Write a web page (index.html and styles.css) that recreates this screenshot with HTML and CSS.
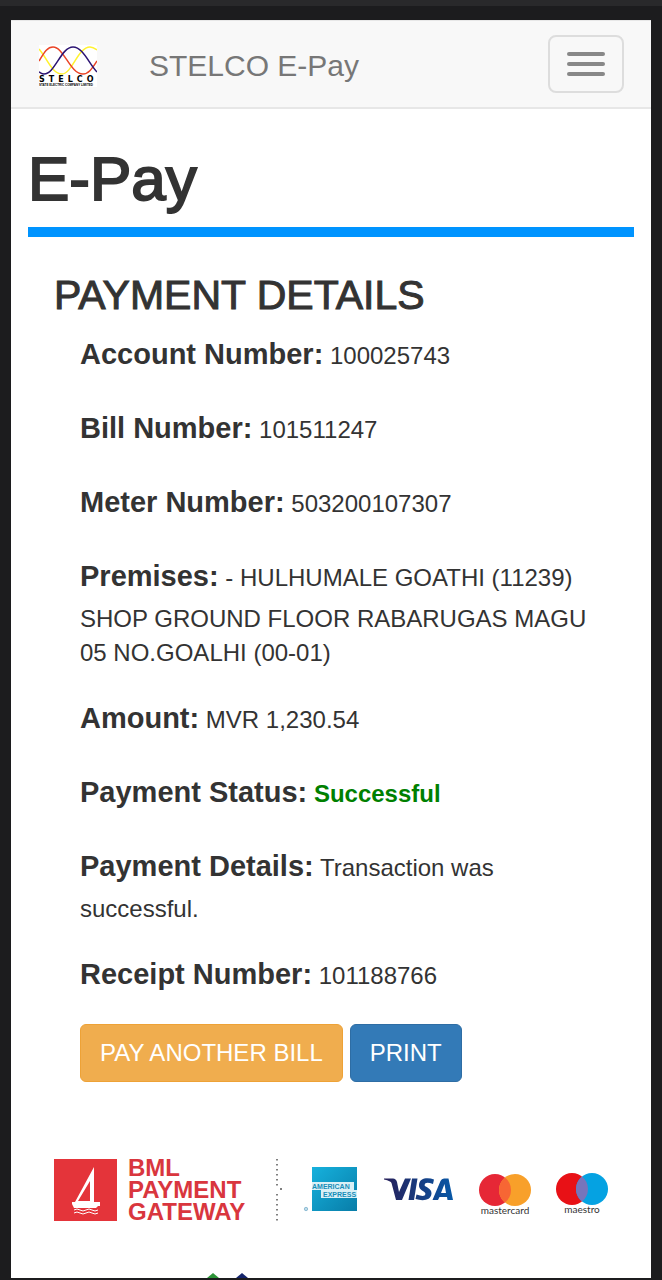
FILE: index.html
```html
<!DOCTYPE html>
<html lang="en">
<head>
<meta charset="utf-8">
<meta name="viewport" content="width=device-width, initial-scale=1">
<title>STELCO E-Pay</title>
<link rel="stylesheet" href="styles.css">
</head>
<body>
<div class="page">
  <header class="navbar">
    <a class="brand" href="#">
      <svg class="brand-logo" viewBox="0 0 58 42" role="img" aria-label="STELCO State Electric Company Limited">
        <rect width="58" height="42" fill="#fff"/>
        <g fill="none" stroke-width="1.5">
          <path d="M0 4C8 13 13 29 23 29S39 2 51 2Q54 2 58 5" stroke="#fff22d"/>
          <path d="M0 16C5 8 8 2 14 2C25 2 31 29 44 29C50 29 54 22 58 16" stroke="#ea4426"/>
          <path d="M0 27C2 28 3 29 5 29C16 29 22 2 34 2C44 2 50 19 58 27" stroke="#2b1372"/>
        </g>
        <text x="0" y="37" class="logo-name">STELCO</text>
        <text x="0" y="41" class="logo-small">STATE ELECTRIC COMPANY LIMITED</text>
      </svg>
      <span>STELCO E-Pay</span>
    </a>
    <button class="toggle" type="button" aria-label="Toggle navigation">
      <span class="bar"></span><span class="bar"></span><span class="bar"></span>
    </button>
  </header>
  <main class="content">
    <h1 class="title">E-Pay</h1>
    <section class="details">
      <h2 class="subtitle">PAYMENT DETAILS</h2>
      <div class="fields">
        <p class="field"><strong class="label">Account Number:</strong> 100025743</p>
        <p class="field"><strong class="label">Bill Number:</strong> 101511247</p>
        <p class="field"><strong class="label">Meter Number:</strong> 503200107307</p>
        <p class="field"><strong class="label">Premises:</strong> - HULHUMALE GOATHI (11239) SHOP GROUND FLOOR RABARUGAS MAGU 05 NO.GOALHI (00-01)</p>
        <p class="field"><strong class="label">Amount:</strong> MVR 1,230.54</p>
        <p class="field"><strong class="label">Payment Status:</strong> <b class="success">Successful</b></p>
        <p class="field"><strong class="label">Payment Details:</strong> Transaction was successful.</p>
        <p class="field"><strong class="label">Receipt Number:</strong> 101188766</p>
        <div class="actions">
          <button class="btn btn-warning" type="button">PAY ANOTHER BILL</button>
          <button class="btn btn-primary" type="button">PRINT</button>
        </div>
      </div>
    </section>
  </main>
  <footer class="footer">
    <div class="gateways">
      <svg width="201" height="64" viewBox="0 0 201 64" role="img" aria-label="BML Payment Gateway">
        <rect y="1" width="63" height="62" fill="#e4343a"/>
        <path fill="#fff" fill-rule="evenodd" d="M40 9V44H46V48H44L42 50H20L18 46V44H21ZM36 23L24 43H36Z"/>
        <path d="M20 52q3-2 6 0t6 0t6 0t6 0M20 55q3-2 6 0t6 0t6 0t6 0" fill="none" stroke="#fff" stroke-width="1"/>
        <g class="bml-text">
          <text x="74" y="18">BML</text>
          <text x="74" y="40">PAYMENT</text>
          <text x="74" y="62">GATEWAY</text>
        </g>
      </svg>
      <svg width="8" height="64" viewBox="0 0 8 64" aria-hidden="true">
        <path d="M2 1V28M2 36V63" stroke="#555" stroke-width="1.5" stroke-dasharray="1.5 3.5" fill="none"/>
        <circle cx="6" cy="31" r="1" fill="#555"/>
      </svg>
      <svg width="54" height="64" viewBox="0 0 54 64" role="img" aria-label="American Express">
        <defs><linearGradient id="amex" x1="0" y1="0" x2="1" y2="1"><stop stop-color="#16b1dd"/><stop offset="1" stop-color="#087da8"/></linearGradient></defs>
        <rect x="9" y="9" width="45" height="44" fill="url(#amex)"/>
        <path d="M9 24H51V32H54V40H18V32H9Z" fill="#d9f0f6"/>
        <text x="9" y="31" class="amex-text">AMERICAN</text>
        <text x="20" y="39" class="amex-text">EXPRESS</text>
        <circle cx="3" cy="51" r="1.7" fill="#bcdbe9" stroke="#72aac8" stroke-width=".7"/>
      </svg>
      <svg width="81" height="64" viewBox="0 0 81 64" role="img" aria-label="Visa">
        <defs><linearGradient id="visa" gradientUnits="userSpaceOnUse" x1="7" x2="76" y1="0" y2="0"><stop stop-color="#261f59"/><stop offset="1" stop-color="#0858a7"/></linearGradient></defs>
        <g fill="url(#visa)">
          <path d="M7 20.500H16Q19 20.500 20 24L22 34L28 20.500H34L25 42H19L14.500 25Q14 23 7 21.500Z"/>
          <path d="M35 20.500H40.500L37 42H31.500Z"/>
          <path d="M57 21.500L56 26Q48 23 47.500 27C47.500 29 55 30 54.500 35.500C54 43 45 43 38.500 41L39.500 36.500Q48 39.500 48.500 36C48.500 33 41.500 32.500 42 27C42.500 19.500 51 19.500 57 21.500Z"/>
          <path fill-rule="evenodd" d="M67 20.500H71.500L76 42H70.500L70 39H62.500L61 42H55.500L63.500 23Q64.500 20.500 67 20.500ZM67.500 26L64 35H69Z"/>
        </g>
      </svg>
      <svg width="54" height="64" viewBox="0 0 54 64" role="img" aria-label="Mastercard">
        <circle cx="17" cy="32" r="16" fill="#e62736"/><circle cx="37" cy="32" r="16" fill="#f8a02a"/>
        <path d="M27 19.500A16 16 0 0 1 27 44.500A16 16 0 0 1 27 19.500Z" fill="#f76634"/>
        <text x="27" y="56" class="card-text">mastercard</text>
      </svg>
      <svg width="57" height="64" viewBox="0 0 57 64" role="img" aria-label="Maestro">
        <circle cx="20" cy="31" r="16" fill="#e81116"/><circle cx="40" cy="31" r="16" fill="#05a2e2"/>
        <path d="M30 18.500A16 16 0 0 1 30 43.500A16 16 0 0 1 30 18.500Z" fill="#7775bb"/>
        <text x="30" y="55" class="card-text">maestro</text>
      </svg>
    </div>
    <svg class="partner" width="60" height="5" viewBox="0 0 60 5" aria-hidden="true">
      <path d="M8 5L14 0L20 5Z" fill="#2c9438"/><path d="M37 5L43 0L49 5Z" fill="#14246c"/>
    </svg>
  </footer>
</div>
</body>
</html>
```
FILE: styles.css
```css
* { box-sizing: border-box; }

body {
  margin: 0;
  padding: 14px 11px 1px;
  border-top: 6px solid #29292b;
  min-height: 100vh;
  background: #1c1c1e;
  color: #333;
  font-family: "Liberation Sans", Arial, sans-serif;
  font-size: 24px;
  line-height: 34px;
}

.page { background: #fff; }

.navbar {
  display: flex;
  align-items: center;
  justify-content: space-between;
  height: 89px;
  padding: 0 27px 0 28px;
  background: #f8f8f8;
  border-top: 1px solid #e7e7e7;
  border-bottom: 2px solid #e7e7e7;
}

.brand {
  display: flex;
  align-items: center;
  gap: 52px;
  padding-top: 4px;
  color: #777;
  font-size: 30px;
  text-decoration: none;
}

.brand-logo { width: 58px; height: 42px; }
.logo-name { font-size: 8px; font-weight: bold; font-family: "DejaVu Sans", sans-serif; letter-spacing: 4px; }
.logo-small { font-size: 3px; font-weight: bold; }

.toggle {
  display: flex;
  flex-direction: column;
  gap: 6px;
  padding: 15px 17px;
  background: transparent;
  border: 2px solid #ddd;
  border-radius: 8px;
}

.bar { width: 38px; height: 4px; border-radius: 2px; background: #888; }

.content { padding: 34px 17px 0; }

.title {
  margin: 0;
  padding-bottom: 12px;
  border-bottom: 10px solid #0094ff;
  font-size: 62px;
  font-weight: normal;
  line-height: 72px;
  -webkit-text-stroke: 2px #333;
}

.details { padding: 34px 26px 0; }

.subtitle {
  margin: 0;
  font-size: 41px;
  font-weight: normal;
  line-height: 48px;
  -webkit-text-stroke: 1px #333;
}

.fields { padding: 9px 10px 0 26px; }
.field { margin: 0 0 22px; }
.label { font-size: 29px; line-height: 52px; }
.success { color: #008000; }

.actions { display: flex; flex-wrap: wrap; gap: 7px; padding-top: 2px; }

.btn {
  padding: 11px 19px;
  border: 1px solid;
  border-radius: 6px;
  color: #fff;
  font: inherit;
}

.btn-warning { background: #f0ad4e; border-color: #eea236; }
.btn-primary { background: #337ab7; border-color: #2e6da4; }

.footer { padding: 76px 40px 0 43px; }
.gateways { display: flex; gap: 20px; }
.gateways svg { flex: none; overflow: visible; }
.bml-text { fill: #d9363e; font-size: 24px; font-weight: bold; }
.amex-text { fill: #168db8; font-size: 7px; font-weight: bold; }
.card-text { fill: #333; font-family: Lato, sans-serif; font-size: 10px; text-anchor: middle; }
.partner { display: block; margin: 51px 0 0 145px; }
```
